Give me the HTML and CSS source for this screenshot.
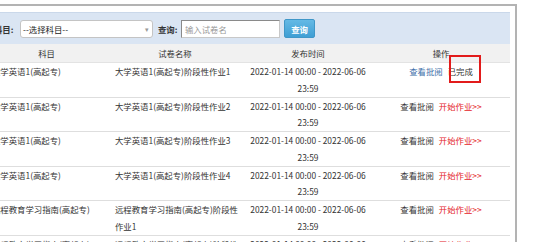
FILE: index.html
```html
<!DOCTYPE html>
<html lang="zh-CN">
<head>
<meta charset="utf-8">
<title>作业列表</title>
<link rel="stylesheet" href="styles.css">
</head>
<body>
<div class="panel">
  <div class="toolbar">
    <span class="label label-subject">科目:</span>
    <div class="select"><span>--选择科目--</span><span class="arrow">▾</span></div>
    <span class="label label-query">查询:</span>
    <input class="search" type="text" placeholder="输入试卷名">
    <button class="btn" type="button">查询</button>
  </div>
  <table class="grid">
    <colgroup>
      <col class="c1"><col class="c2"><col class="c3"><col class="c4">
    </colgroup>
    <thead>
      <tr><th>科目</th><th>试卷名称</th><th>发布时间</th><th>操作</th></tr>
    </thead>
    <tbody>
      <tr>
        <td class="subj">大学英语1(高起专)</td>
        <td class="name">大学英语1(高起专)阶段性作业1</td>
        <td class="time">2022-01-14 00:00 - 2022-06-06 23:59</td>
        <td class="ops"><span class="view blue">查看批阅</span><span class="done">已完成</span></td>
      </tr>
      <tr>
        <td class="subj">大学英语1(高起专)</td>
        <td class="name">大学英语1(高起专)阶段性作业2</td>
        <td class="time">2022-01-14 00:00 - 2022-06-06 23:59</td>
        <td class="ops"><span class="view">查看批阅</span><span class="start">开始作业&gt;&gt;</span></td>
      </tr>
      <tr>
        <td class="subj">大学英语1(高起专)</td>
        <td class="name">大学英语1(高起专)阶段性作业3</td>
        <td class="time">2022-01-14 00:00 - 2022-06-06 23:59</td>
        <td class="ops"><span class="view">查看批阅</span><span class="start">开始作业&gt;&gt;</span></td>
      </tr>
      <tr>
        <td class="subj">大学英语1(高起专)</td>
        <td class="name">大学英语1(高起专)阶段性作业4</td>
        <td class="time">2022-01-14 00:00 - 2022-06-06 23:59</td>
        <td class="ops"><span class="view">查看批阅</span><span class="start">开始作业&gt;&gt;</span></td>
      </tr>
      <tr>
        <td class="subj">远程教育学习指南(高起专)</td>
        <td class="name">远程教育学习指南(高起专)阶段性作业1</td>
        <td class="time">2022-01-14 00:00 - 2022-06-06 23:59</td>
        <td class="ops"><span class="view">查看批阅</span><span class="start">开始作业&gt;&gt;</span></td>
      </tr>
      <tr>
        <td class="subj">远程教育学习指南(高起专)</td>
        <td class="name">远程教育学习指南(高起专)阶段性作业2</td>
        <td class="time">2022-01-14 00:00 - 2022-06-06 23:59</td>
        <td class="ops"><span class="view">查看批阅</span><span class="start">开始作业&gt;&gt;</span></td>
      </tr>
    </tbody>
  </table>
</div>
<div class="mark"></div>
</body>
</html>
```
FILE: styles.css
```css
html, body {
  margin: 0;
  padding: 0;
  background: #fff;
  overflow: hidden;
}
body {
  position: relative;
  width: 553px;
  height: 242px;
  font-family: "Noto Sans CJK SC", "Noto Sans", sans-serif;
  font-size: 8.4px;
  color: #333;
}
.panel {
  margin: 4px 0 0 -20px;
  width: 523px;
  padding: 6px 5px 0 5px;
  border: 2px solid #b3b3b3;
  border-bottom: none;
  height: 260px;
}
.toolbar {
  display: flex;
  align-items: center;
  height: 31px;
  border-top: 1px solid #cad8ea;
  background: #dae5f3;
  padding-left: 7px;
}
.label {
  font-weight: bold;
  color: #333;
  white-space: nowrap;
}
.label-subject {
  width: 21px;
  margin-right: 5px;
}
.select {
  box-sizing: border-box;
  width: 133px;
  height: 18px;
  background: #fff;
  border: 1px solid #c4c4c4;
  border-radius: 3px;
  display: flex;
  align-items: center;
  justify-content: space-between;
  padding: 0 3px 0 2px;
  color: #222;
}
.select .arrow {
  color: #999;
  font-size: 7px;
}
.label-query {
  margin-left: 5px;
  width: 23px;
}
.search {
  box-sizing: border-box;
  width: 99px;
  height: 18px;
  margin: 1px 0 0 0;
  padding: 0 3px;
  border: 1px solid #8a8a8a;
  border-right-color: #c8c8c8;
  border-bottom-color: #c8c8c8;
  background: #fff;
  font-family: inherit;
  font-size: 8.4px;
  outline: none;
}
.search::placeholder {
  color: #999;
}
.btn {
  box-sizing: border-box;
  width: 31px;
  height: 19px;
  margin-left: 4px;
  padding: 0;
  border: 1px solid #3f97c8;
  border-radius: 2px;
  background: linear-gradient(#64b9e5, #3f9fd4);
  color: #fff;
  font-family: inherit;
  font-size: 8.4px;
  font-weight: bold;
}
.grid {
  width: 523px;
  border-collapse: collapse;
  table-layout: fixed;
}
.c1 { width: 119px; }
.c2 { width: 138px; }
.c3 { width: 128px; }
.c4 { width: 138px; }
.grid th {
  height: 18px;
  padding: 0;
  background: #f1f1f1;
  border-bottom: 1px solid #e3e3e3;
  font-weight: normal;
  text-align: center;
  color: #333;
  line-height: 18px;
}
.grid td {
  padding: 0;
  vertical-align: top;
  line-height: 16.75px;
  border-bottom: 1px solid #dedede;
  height: 33.5px;
}
.grid td.subj {
  padding-left: 5px;
  white-space: nowrap;
}
.grid td.name {
  padding-left: 9px;
}
.grid td.time {
  text-align: center;
}
.grid td.ops {
  text-align: center;
  white-space: nowrap;
}
.view {
  color: #333;
}
.view.blue {
  color: #3b6ea8;
}
.done {
  margin-left: 5px;
  color: #333;
}
.start {
  margin-left: 5px;
  color: #e4231f;
}
.mark {
  position: absolute;
  left: 449px;
  top: 55px;
  width: 28px;
  height: 24px;
  border: 2px solid #e21b1b;
}
```
